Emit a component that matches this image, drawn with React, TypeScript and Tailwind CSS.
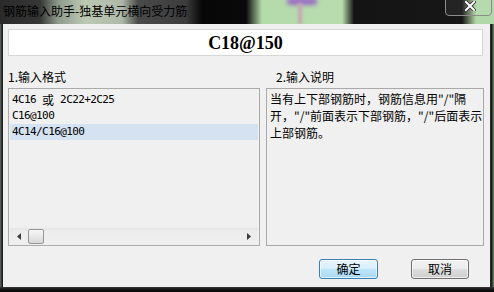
export default function App() {
  const cjk = "font-['Noto_Sans_CJK_SC','Noto_Sans',sans-serif]";
  const mono = "text-[11px] tracking-[-0.6px] font-['DejaVu_Sans_Mono',monospace] text-black whitespace-nowrap";
  return (
    <div className="w-[494px] h-[292px] bg-[#0c0c0c] flex flex-col overflow-hidden">
      {/* Title bar */}
      <div className="relative h-[24px] shrink-0 overflow-hidden bg-[linear-gradient(90deg,#2a2a2a_0px,#363636_40px,#8f9a8c_58px,#bccab4_85px,#aeb8a8_122px,#4a4a4a_138px,#3c3c3c_186px,#070707_202px,#090909_246px,#b4daaa_262px,#b8dcae_342px,#141414_354px,#161616_462px,#b1d8a8_476px)]">
        <div className="absolute left-[287px] top-[-2px] w-[30px] h-[7px] bg-[#9a6cc4] blur-[2px] rounded-full" />
        <div className="absolute left-[298px] top-[3px] w-[4px] h-[21px] bg-[#c6a6b4] blur-[1.5px]" />
        <div className={`relative pl-[3px] pt-[2px] text-[12px] leading-[18px] text-black whitespace-nowrap ${cjk}`}>
          钢筋输入助手-独基单元横向受力筋
        </div>
        <div className="absolute right-[2px] top-[-1px] w-[47px] h-[17px] rounded-b-[4px] border border-[#8c8c8c] bg-[#ffffff10] flex items-center justify-center">
          <svg width="12" height="10" viewBox="0 0 12 10" className="mt-[-3px] ml-[3px]">
            <path d="M2 1 L10 9 M10 1 L2 9" stroke="#2a2a2a" strokeWidth="3.6" strokeLinecap="square" />
            <path d="M2 1 L10 9 M10 1 L2 9" stroke="#ffffff" strokeWidth="2" strokeLinecap="square" />
          </svg>
        </div>
      </div>

      <div className="flex flex-1 min-h-0">
        <div className="w-[3px] bg-[linear-gradient(90deg,#58625e_0px,#4c5450_1px,#1e1e1e_2px)]" />
        <div className="flex-1 bg-[#f0f0f0] flex flex-col pt-[5px] pl-[5px] pr-[6px]">
          {/* Big input */}
          <div className="h-[27px] mr-[1px] border border-[#d6d6d6] bg-white flex items-center justify-center">
            <span className="font-['Liberation_Serif',serif] font-bold text-[18px] leading-[20px] text-black">C18@150</span>
          </div>

          {/* Labels */}
          <div className={`mt-[14px] flex text-[12px] leading-[14px] text-black ${cjk}`}>
            <div className="w-[258px]">1.输入格式</div>
            <div className="pl-[10px]">2.输入说明</div>
          </div>

          {/* Boxes */}
          <div className="mt-[4px] flex gap-[6px]">
            <div className="w-[252px] h-[158px] border border-[#ababab] bg-[#f0f0f0] flex flex-col">
              <div className="flex-1 pt-[3px] px-[1px]">
                <div className={`h-[16px] flex items-center pl-[2px] ${mono}`}>
                  4C16 <span className={`text-[12px] tracking-normal mx-[6px] ${cjk}`}>或</span>2C22+2C25
                </div>
                <div className={`h-[16px] flex items-center pl-[2px] ${mono}`}>C16@100</div>
                <div className={`h-[16px] flex items-center pl-[2px] bg-[#d4e2f1] ${mono}`}>4C14/C16@100</div>
              </div>
              {/* Horizontal scrollbar */}
              <div className="h-[17px] mx-[1px] bg-[linear-gradient(180deg,#e4e4e4_0px,#ececec_3px,#efefef_100%)] flex items-center">
                <div className="w-[18px] h-full flex items-center justify-center">
                  <svg width="4" height="7" viewBox="0 0 4 7"><path d="M4 0 L0 3.5 L4 7 Z" fill="#3c3c3c" /></svg>
                </div>
                <div className="w-[16px] h-[15px] rounded-[2px] border border-[#979797] bg-[linear-gradient(180deg,#f6f6f6_0%,#e8e8e8_50%,#d6d6d6_100%)]" />
                <div className="flex-1" />
                <div className="w-[18px] h-full flex items-center justify-center">
                  <svg width="4" height="7" viewBox="0 0 4 7"><path d="M0 0 L4 3.5 L0 7 Z" fill="#3c3c3c" /></svg>
                </div>
              </div>
            </div>
            <div className={`w-[218px] h-[158px] border border-[#a9a9a9] bg-[#f0f0f0] pt-[1px] pl-[3px] text-[12px] leading-[17px] text-black whitespace-nowrap ${cjk}`}>
              当有上下部钢筋时，钢筋信息用"/"隔<br />
              开，"/"前面表示下部钢筋，"/"后面表示<br />
              上部钢筋。
            </div>
          </div>

          {/* Buttons */}
          <div className={`mt-[13px] flex justify-end gap-[33px] pr-[15px] text-[12px] ${cjk}`}>
            <button className="w-[59px] h-[20px] rounded-[3px] border border-[#3c7fb1] bg-[linear-gradient(180deg,#e8f5fc_0%,#d8effb_48%,#bde5fb_52%,#a9d9f4_100%)] shadow-[inset_0_0_0_1px_#ffffffa0] leading-[18px] text-black">
              确定
            </button>
            <button className="w-[58px] h-[20px] rounded-[3px] border border-[#707070] bg-[linear-gradient(180deg,#f2f2f2_0%,#ebebeb_48%,#dddddd_52%,#cfcfcf_100%)] shadow-[inset_0_0_0_1px_#ffffffa0] leading-[18px] text-black">
              取消
            </button>
          </div>
        </div>
        <div className="w-[4px] bg-[linear-gradient(90deg,#2a2a2a_0px,#1a1a1a_2px,#5f7a5a_3px)]" />
      </div>
      <div className="h-[5px] shrink-0 bg-[linear-gradient(180deg,#3a3a3a_0px,#1a1a1a_2px,#050505_5px)]" />
    </div>
  );
}
